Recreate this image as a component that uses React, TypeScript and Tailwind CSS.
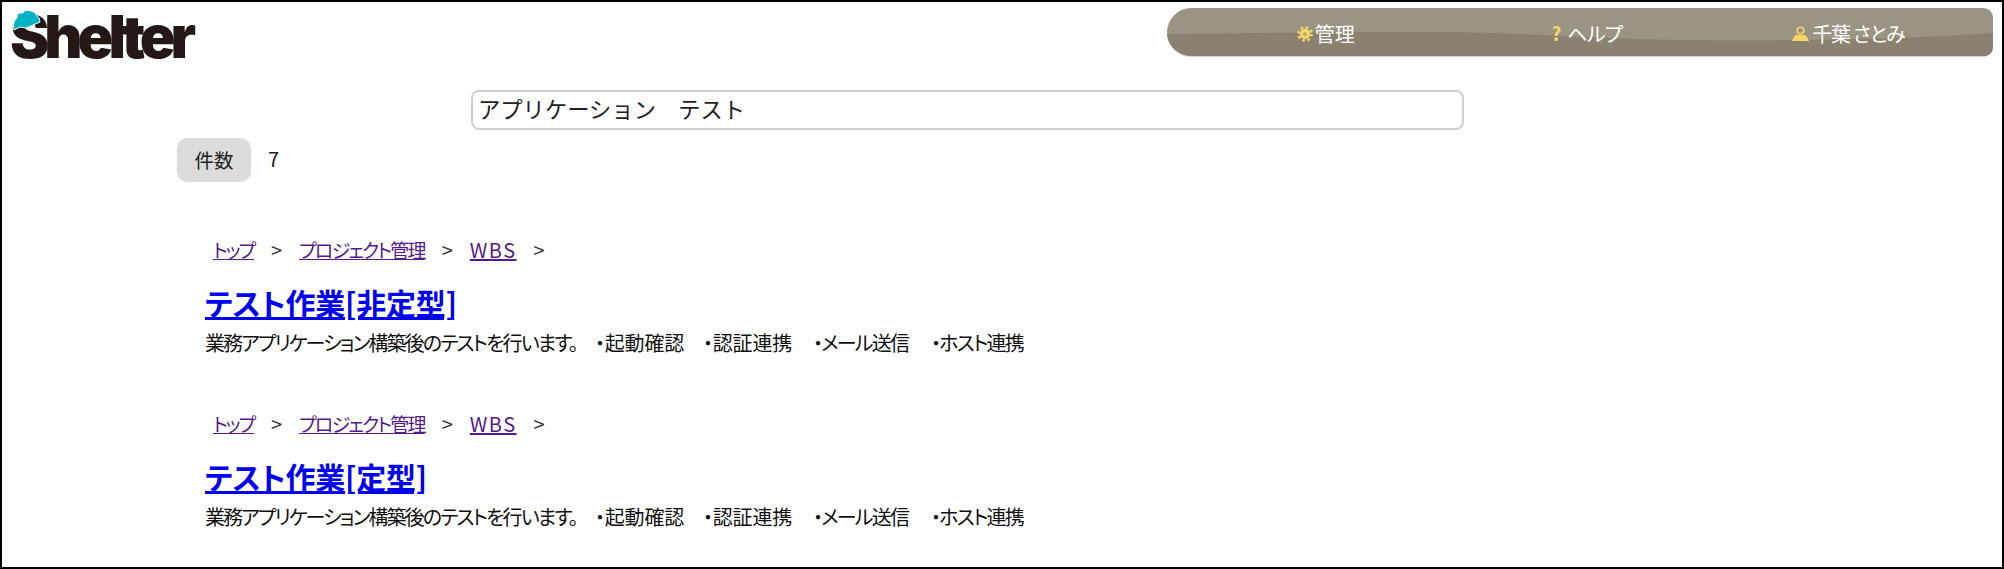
import React from 'react'

const FONT = '[font-family:"Noto_Sans_CJK_JP","Noto_Sans",sans-serif]'

function Logo() {
  return (
    <div className="relative w-[186px] h-[54px] ml-[9px] mt-[6px]">
      <span className="absolute left-[-1px] top-[-1px] [font-family:Inter,sans-serif] font-black text-[59px] leading-[60px] tracking-[-5px] text-[#231815]">
        Shelter
      </span>
      <svg className="absolute left-[1px] top-[1px]" width="29" height="23" viewBox="0 0 29 23">
        <path d="M2 21 C1 15 2 11 5 9 L6 4 L11 4 L13 1 L20 2 L23 4 L27 9 L28 13 L14 19 L8 18 Z" fill="#00b2c4" stroke="#ffffff" strokeWidth="1" />
      </svg>
    </div>
  )
}

function NavBar() {
  return (
    <div className="relative w-[826px] h-[49px] mt-[6px] mr-[9px] rounded-l-[25px] rounded-r-[10px] overflow-hidden bg-[#9c9482] border-b border-[#d6d3ca]">
      <svg className="absolute inset-0" width="826" height="49" viewBox="0 0 826 49" preserveAspectRatio="none">
        <path d="M0 26 C100 25 200 23 290 24 C380 26 440 31 520 32 C640 33 740 31 826 25 L826 49 L0 49 Z" fill="#8a8170" />
      </svg>
      <div className={`relative h-full pl-[28px] pr-[14px] pt-[3px] grid grid-cols-3 items-center text-white text-[20px] [font-feature-settings:"palt"] ${FONT}`}>
        <div className="flex items-center justify-center gap-[2px]">
          <svg width="16" height="16" viewBox="0 0 16 16">
            <circle cx="8" cy="8" r="5" fill="#f7d768" />
            <circle cx="8" cy="8" r="2" fill="#b9a766" />
            <circle cx="8" cy="8" r="6.5" fill="none" stroke="#f7d768" strokeWidth="2.6" strokeDasharray="2.5 2.6" />
          </svg>
          <span>管理</span>
        </div>
        <div className="flex items-center justify-center gap-[6px]">
          <span className="text-[#f7d768] font-bold text-[19px]">?</span>
          <span className="tracking-[-0.8px]">ヘルプ</span>
        </div>
        <div className="flex items-center justify-center gap-[3px]">
          <svg width="17" height="15" viewBox="0 0 17 15">
            <circle cx="8.5" cy="4.5" r="3.3" fill="none" stroke="#f7d768" strokeWidth="1.6" />
            <path d="M0 15 L3 9.5 L6 9 L11 9 L14 9.5 L17 15 Z" fill="#f7d768" />
          </svg>
          <span className="tracking-[-1.2px]">千葉 さとみ</span>
        </div>
      </div>
    </div>
  )
}

function ResultItem({ title }: { title: string }) {
  return (
    <div className="pl-[24px] h-[174px]">
      <div className="pl-[8px] flex items-center gap-[17px] h-[28px] text-[20px] leading-[28px] text-[#333] [font-feature-settings:'palt']">
        <a href="#" className="underline text-[19px] text-[#551a8b] tracking-[-2px]">トップ</a>
        <span>&gt;</span>
        <a href="#" className="underline text-[19px] text-[#551a8b] tracking-[-1.8px]">プロジェクト管理</a>
        <span>&gt;</span>
        <a href="#" className="underline text-[20px] text-[#551a8b] tracking-[1.5px]">WBS</a>
        <span>&gt;</span>
      </div>
      <h2 className="mt-[18px] text-[30px] leading-[40px] font-bold tracking-[-0.2px] [font-feature-settings:'palt']">
        <a href="#" className="underline text-[#0000ee]">{title}</a>
      </h2>
      <div className="mt-[7px] flex text-[20px] leading-[28px] text-[#111] whitespace-pre [font-feature-settings:'palt']">
        <span className="w-[390px] tracking-[-1.9px]">業務アプリケーション構築後のテストを行います。</span>
        <span className="w-[108px] tracking-[-0.2px]">・起動確認</span>
        <span className="w-[110px] tracking-[-0.2px]">・認証連携</span>
        <span className="w-[118px] tracking-[-1.8px]">・メール送信</span>
        <span className="tracking-[-1.8px]">・ホスト連携</span>
      </div>
    </div>
  )
}

export default function App() {
  return (
    <div className={`w-[2004px] h-[569px] overflow-hidden border-2 border-black bg-white ${FONT}`}>
      <div className="flex items-start justify-between h-[57px]">
        <Logo />
        <NavBar />
      </div>

      <div className="pl-[469px] mt-[31px]">
        <div className="w-[993px] h-[40px] rounded-[8px] border-2 border-[#cfcfcf] px-[5px] pb-[3px] flex items-center text-[22.3px] text-[#222]">
          アプリケーション　テスト
        </div>
      </div>

      <div className="flex items-center pl-[175px] mt-[8px] h-[44px]">
        <div className="w-[74px] h-[44px] rounded-[10px] bg-[#dcdcdc] flex items-center justify-center text-[19.5px] text-[#222]">
          件数
        </div>
        <span className="ml-[17px] pb-[2px] text-[20px] text-[#222]">7</span>
      </div>

      <div className="mt-[54px] pl-[179px]">
        <ResultItem title="テスト作業[非定型]" />
        <ResultItem title="テスト作業[定型]" />
      </div>
    </div>
  )
}
